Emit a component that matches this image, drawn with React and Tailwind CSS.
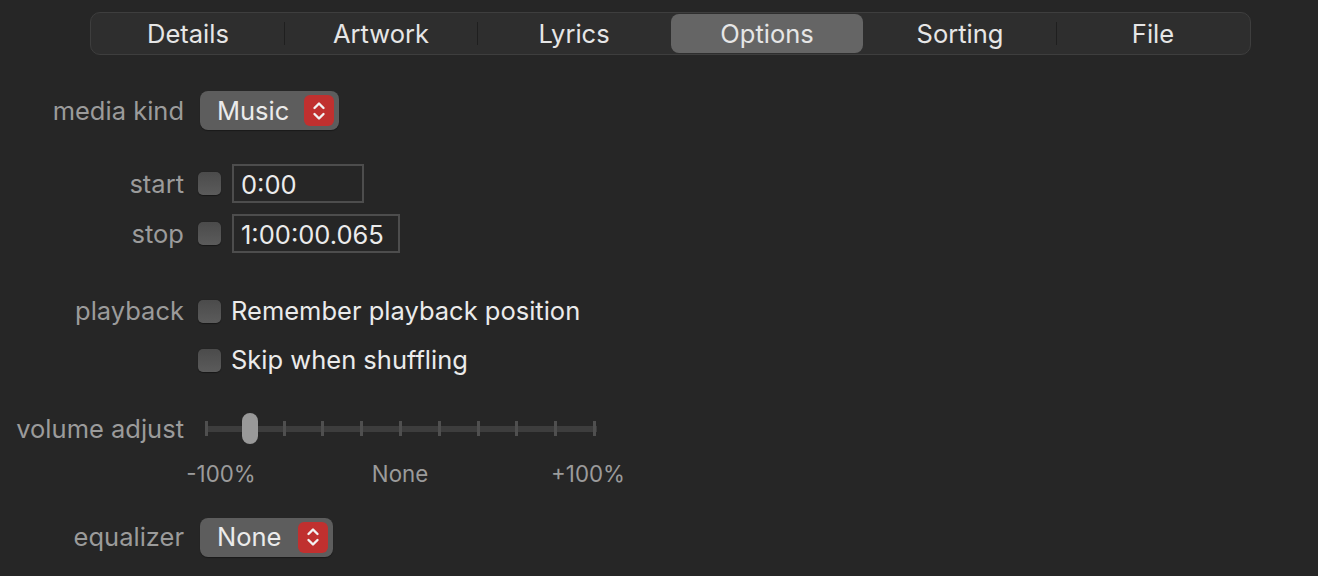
import React from "react";

const font = { fontFamily: "Inter, 'Noto Sans', 'Liberation Sans', sans-serif" };

function Stepper() {
  return (
    <div className="flex h-[31px] w-[30px] items-center justify-center rounded-[6px] bg-[#c0302f]">
      <svg width="14" height="22" viewBox="0 0 14 22" fill="none" stroke="#f2f2f2" strokeWidth="2.4" strokeLinecap="round" strokeLinejoin="round">
        <path d="M2.5 8 L7 3.5 L11.5 8" />
        <path d="M2.5 14 L7 18.5 L11.5 14" />
      </svg>
    </div>
  );
}

function Popup({ label, width }) {
  return (
    <div className={`flex h-[39px] ${width} items-center justify-between rounded-[8px] bg-[#5d5d5d] pl-[17px] pr-[5px] shadow-[0_1px_1px_rgba(0,0,0,0.35)]`}>
      <span className="text-[25.5px] leading-none text-[#ebebeb]">{label}</span>
      <Stepper />
    </div>
  );
}

function Checkbox() {
  return <div className="h-[23px] w-[23px] shrink-0 rounded-[5px] bg-linear-to-b from-[#4b4b4b] to-[#5b5b5b] shadow-[0_0.5px_1px_rgba(0,0,0,0.4)]" />;
}

function Label({ children }) {
  return <div className="w-[184px] shrink-0 text-right text-[25.5px] leading-none text-[#9b9b9b]">{children}</div>;
}

const tabs = ["Details", "Artwork", "Lyrics", "Options", "Sorting", "File"];

export default function App() {
  const ticks = Array.from({ length: 11 }, (_, i) => i);
  return (
    <div className="h-[576px] w-[1318px] overflow-hidden bg-[#262626] pt-[12px]" style={font}>
      <div className="ml-[90px] flex h-[43px] w-[1161px] items-center rounded-[10px] border border-[#3e3e3e] bg-[#2e2e2e] px-[1px]">
        {tabs.map((t, i) => {
          const sel = t === "Options";
          const showSep = i > 0 && t !== "Options" && tabs[i - 1] !== "Options";
          return (
            <React.Fragment key={t}>
              {i > 0 && <div className={`h-[23px] w-px shrink-0 ${showSep ? "bg-[#1f1f1f]" : "bg-transparent"}`} />}
              <div className={`flex h-[39px] flex-1 items-center justify-center rounded-[8px] text-[25.5px] leading-none text-[#e6e6e6] ${sel ? "bg-[#656565]" : ""}`}>
                {t}
              </div>
            </React.Fragment>
          );
        })}
      </div>

      <div className="flex flex-col">
        <div className="mt-[36px] flex h-[39px] items-center">
          <Label>media kind</Label>
          <div className="ml-[16px]">
            <Popup label="Music" width="w-[139px]" />
          </div>
        </div>

        <div className="mt-[34px] flex h-[39px] items-center">
          <Label>start</Label>
          <div className="ml-[14px] flex items-center gap-[11px]">
            <Checkbox />
            <div className="flex h-[39px] w-[132px] items-center border-2 border-[#4d4d4d] pl-[7px] pt-[2px] text-[25.5px] leading-none text-[#ebebeb]">0:00</div>
          </div>
        </div>

        <div className="mt-[11px] flex h-[39px] items-center">
          <Label>stop</Label>
          <div className="ml-[14px] flex items-center gap-[11px]">
            <Checkbox />
            <div className="flex h-[39px] w-[168px] items-center border-2 border-[#4d4d4d] pl-[7px] pt-[2px] text-[25.5px] leading-none text-[#ebebeb]">1:00:00.065</div>
          </div>
        </div>

        <div className="mt-[43px] flex h-[30px] items-center">
          <Label>playback</Label>
          <div className="ml-[14px] flex items-center gap-[10px]">
            <Checkbox />
            <span className="text-[25.5px] leading-none text-[#ebebeb]">Remember playback position</span>
          </div>
        </div>

        <div className="mt-[19px] flex h-[30px] items-center">
          <div className="w-[184px] shrink-0" />
          <div className="ml-[14px] flex items-center gap-[10px]">
            <Checkbox />
            <span className="text-[25.5px] leading-none text-[#ebebeb]">Skip when shuffling</span>
          </div>
        </div>

        <div className="mt-[37px] flex h-[34px] items-center">
          <Label>volume adjust</Label>
          <div className="relative ml-[21px] h-[34px] w-[392px]">
            <div className="absolute left-0 right-0 top-[14px] h-[6px] bg-[#3d3d3d]" />
            {ticks.map((i) => (
              <div
                key={i}
                className="absolute top-[9px] h-[15px] w-[3px] bg-[#4f4f4f]"
                style={{ left: `${i * 38.8}px` }}
              />
            ))}
            <div className="absolute left-[37px] top-[1px] h-[31px] w-[16px] rounded-full bg-[#999999]" />
          </div>
        </div>

        <div className="mt-[16px] flex h-[24px] items-center">
          <div className="w-[184px] shrink-0" />
          <div className="relative h-[24px] w-[450px] text-[22.3px] leading-[24px] text-[#9b9b9b]">
            <span className="absolute left-[37px] top-0 -translate-x-1/2">-100%</span>
            <span className="absolute left-[216px] top-0 -translate-x-1/2">None</span>
            <span className="absolute left-[404px] top-0 -translate-x-1/2">+100%</span>
          </div>
        </div>

        <div className="mt-[32px] flex h-[38px] items-center">
          <Label>equalizer</Label>
          <div className="ml-[16px]">
            <Popup label="None" width="w-[133px]" />
          </div>
        </div>
      </div>
    </div>
  );
}
